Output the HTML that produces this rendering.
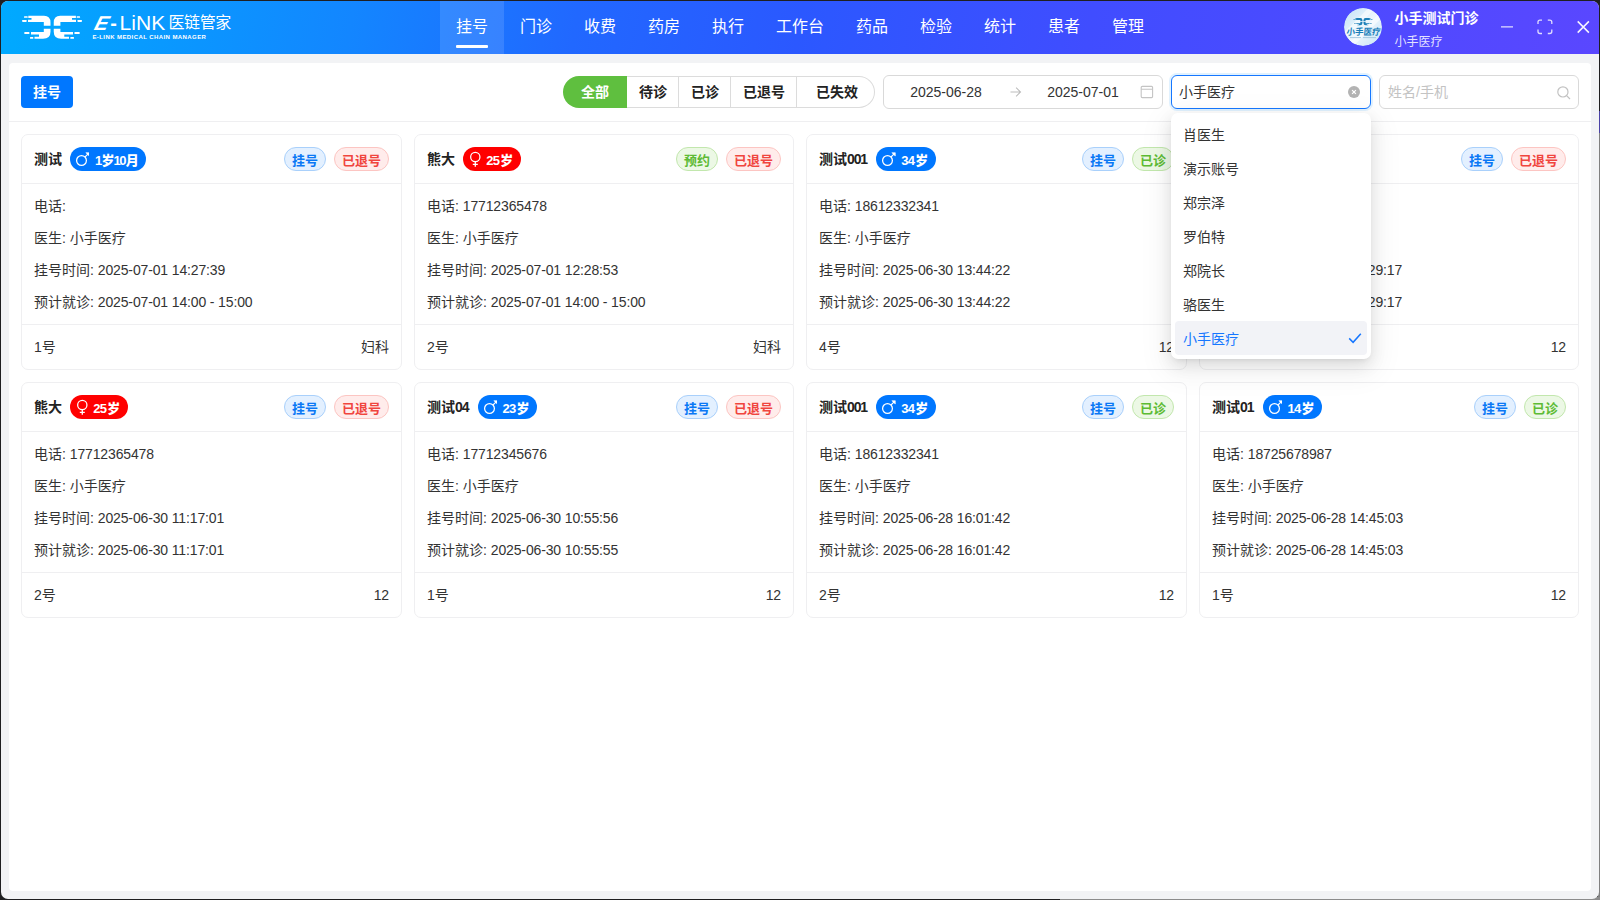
<!DOCTYPE html>
<html lang="zh-CN">
<head>
<meta charset="utf-8">
<title>E-LINK 医链管家</title>
<style>
*{box-sizing:border-box;margin:0;padding:0}
html,body{width:1600px;height:900px;overflow:hidden}
body{background:#1f1f21;font-family:"Liberation Sans","Noto Sans CJK SC",sans-serif;font-size:14px;color:#333;position:relative}
.win{position:absolute;left:1px;top:1px;width:1598px;height:898px;border-radius:7px;background:#f2f3f5;overflow:hidden}
.hdr{position:absolute;left:0;top:0;width:1598px;height:53px;background:linear-gradient(100deg,#00aaff 0%,#1386ff 22%,#2168ff 36%,#2b58ff 50%,#404dff 68%,#5a47ff 100%);color:#fff}
.nav{position:absolute;left:439px;top:0;height:53px;display:flex}
.nav div{width:64px;height:53px;line-height:52px;text-align:center;font-size:16px;position:relative}
.nav div.w3{width:80px}
.nav div.on{background:rgba(255,255,255,.12)}
.nav div.on:after{content:"";position:absolute;left:16px;bottom:6px;width:32px;height:3px;background:#fff;border-radius:1px}
.panel{position:absolute;left:8px;top:62px;width:1582px;height:828px;background:#fff;border-radius:4px}
.tb{position:absolute;left:0;top:0;width:1582px;height:59px;border-bottom:1px solid #efeff1}
.btn{position:absolute;left:12px;top:13px;width:52px;height:32px;background:#0077ff;border-radius:4px;color:#fff;font-weight:bold;font-size:14px;text-align:center;line-height:33px}
.seg{position:absolute;left:554px;top:13px;height:32px;width:312px;display:flex;font-weight:bold;color:#222;line-height:33px;text-align:center}
.seg div{border:1px solid #dcdcdc;border-left:0;height:32px;background:#fff;padding-left:1px;line-height:30px}
.seg div:first-child{border:0;padding-left:0;line-height:32px;background:#5fbf3f;color:#fff;border-radius:16px 0 0 16px}
.seg div:last-child{border-radius:0 16px 16px 0;padding-left:3px}
.inp{position:absolute;top:12px;height:34px;border:1px solid #d9d9d9;border-radius:6px;background:#fff;line-height:32px}
.card{position:absolute;width:380px;height:236px;border:1px solid #efeff1;border-radius:7px;background:#fff}
.ch{position:absolute;left:0;top:0;right:0;height:49px;border-bottom:1px solid #efeff1}
.nm{position:absolute;left:12px;top:0;line-height:47px;font-weight:bold;color:#222;white-space:nowrap;display:flex;align-items:center;height:48px}
.bd{display:inline-flex;align-items:center;height:24px;border-radius:12px;background:#0077ff;color:#fff;font-size:13px;font-weight:bold;padding:0 7.7px 0 5.8px;margin-left:8.3px;line-height:24px}
.bd.f{background:#ff0000;padding-left:6.7px}
.bd svg{margin-right:5.6px;flex:none}
.bd b{position:relative;top:1.5px;letter-spacing:-.4px;margin-right:.4px}
.bd b i{letter-spacing:-.7px;margin-right:1px}
.bd b.t{letter-spacing:-1px}
.bd b.t i{letter-spacing:-1.4px;margin-right:.6px}
i{font-style:normal;letter-spacing:-.14px}
.nm i{letter-spacing:-1.1px;margin-right:1.1px}
.tags{position:absolute;right:12px;top:12px;display:flex;gap:8px}
.tg{height:24px;line-height:25px;border-radius:12px;font-size:13px;font-weight:bold;padding:0 7px;border:1px solid}
.tg.b{color:#0a78f5;background:#e3f0ff;border-color:#a9d0fb}
.tg.r{color:#f0453e;background:#ffeceb;border-color:#fcc5c2}
.tg.g{color:#5dbb34;background:#ecf8e5;border-color:#c2e7ad}
.cb{position:absolute;left:12px;top:55px;line-height:32px;color:#333;white-space:nowrap}
.cf{position:absolute;left:0;top:189px;right:0;height:45px;border-top:1px solid #efeff1;line-height:45px;padding:0 12px;display:flex;justify-content:space-between;color:#333}
.dd{position:absolute;left:1170px;top:112px;width:200px;height:246px;background:#fff;border-radius:7px;box-shadow:0 6px 16px rgba(0,0,0,.10),0 3px 6px -4px rgba(0,0,0,.14),0 9px 28px 8px rgba(0,0,0,.05);padding:4px}
.dd div{height:34px;line-height:37px;padding-left:8px;color:#333;border-radius:4px;position:relative}
.dd div.on{background:#f2f3f7;color:#1677ff}

.brand{position:absolute;left:167.5px;top:0;line-height:44px;font-size:16px;color:#fff;letter-spacing:-.4px}
.ava{position:absolute;left:1343px;top:7px;width:38px;height:38px;border-radius:50%;overflow:hidden}
.un{position:absolute;left:1393.5px;top:6px;line-height:22px;font-size:14px;font-weight:bold;color:#fff}
.us{position:absolute;left:1393.5px;top:30.5px;line-height:20px;font-size:12px;color:rgba(255,255,255,.85)}

.dt{position:absolute;top:0;text-align:center;color:#333}
.inp.sel{border-color:#1677ff;box-shadow:0 0 0 2px rgba(5,145,255,.12)}
</style>
</head>
<body>
<div style="position:absolute;left:1598px;top:111px;width:2px;height:22px;background:#4a42a6"></div>
<div style="position:absolute;left:1598px;top:133px;width:2px;height:767px;background:#808080"></div>
<div style="position:absolute;left:1060px;top:897px;width:540px;height:3px;background:#8c8c8c"></div>
<div class="win">
  <div class="hdr">

    <svg class="logo" width="230" height="53" viewBox="0 0 230 53" style="position:absolute;left:9px;top:0">
      <g transform="translate(-10,-1)" fill="#fff">
        <path d="M28.3 15.8H44Q50.5 15.8 50.5 22.6V25.8H43.8V22H28V19.8H31.5V17.9H28.3Z"/>
        <path d="M50.5 28.8V31.8Q50.5 38.8 43 38.8H34.5V36.7H39V34.6H31V32H43.8V28.8Z"/>
        <path d="M75.9 15.8H60.2Q53.75 15.8 53.75 22.6V25.8H60.4V22H76V19.8H72V17.9H75.9Z"/>
        <path d="M53.75 28.8V31.8Q53.75 38.8 61.2 38.8H69V36.7H64.3V34.6H73V32H60.4V28.8Z"/>
        <rect x="24" y="16.2" width="3.7" height="1.6" rx=".6"/><rect x="22" y="19.9" width="4.8" height="2" rx=".8"/>
        <rect x="24.2" y="32.1" width="5.3" height="1.9" rx=".8"/><rect x="30" y="37" width="3.3" height="1.8" rx=".6"/>
        <rect x="76.6" y="16.2" width="3.5" height="1.6" rx=".6"/><rect x="77.3" y="19.9" width="4.8" height="2" rx=".8"/>
        <rect x="74.3" y="32.1" width="5.5" height="1.9" rx=".8"/><rect x="70.3" y="37" width="3.7" height="1.8" rx=".6"/>
      </g>
      <text transform="translate(82.3,29) skewX(-26)" font-family="Liberation Sans, sans-serif" font-size="20" font-weight="bold" fill="#fff" textLength="13.5" lengthAdjust="spacingAndGlyphs">E</text>
      <text x="100.2" y="29" font-family="Liberation Sans, sans-serif" font-size="20" font-weight="bold" fill="#fff" textLength="6.6" lengthAdjust="spacingAndGlyphs">-</text>
      <text x="109.6" y="29" font-family="Liberation Sans, sans-serif" font-size="20" fill="#fff" textLength="45.6" lengthAdjust="spacingAndGlyphs">LiNK</text>
      <text x="82.4" y="38.4" font-family="Liberation Sans, sans-serif" font-size="6" font-weight="bold" fill="#fff" textLength="113.5" lengthAdjust="spacing">E-LINK MEDICAL CHAIN MANAGER</text>
    </svg>
    <div class="brand">医链管家</div>

    <div class="ava">
      <svg width="38" height="38" viewBox="0 0 38 38">
        <defs><linearGradient id="ag" x1="0" y1="0" x2="1" y2="1"><stop offset="0" stop-color="#bfe0f5"/><stop offset=".5" stop-color="#eef7fd"/><stop offset="1" stop-color="#c6e3f6"/></linearGradient></defs>
        <circle cx="19" cy="19" r="19" fill="url(#ag)"/>
        <path d="M-2 30L30 -2M4 40L40 4" stroke="#fff" stroke-opacity=".55" stroke-width="5"/>
        <g transform="translate(9.4,10) scale(.317) translate(-22,-15.8)" fill="#1b7fb8">
          <path d="M28.3 15.8H44Q50.5 15.8 50.5 22.6V25.8H43.8V22H28V19.8H31.5V17.9H28.3Z"/>
          <path d="M50.5 28.8V31.8Q50.5 38.8 43 38.8H34.5V36.7H39V34.6H31V32H43.8V28.8Z"/>
          <path d="M75.9 15.8H60.2Q53.75 15.8 53.75 22.6V25.8H60.4V22H76V19.8H72V17.9H75.9Z"/>
          <path d="M53.75 28.8V31.8Q53.75 38.8 61.2 38.8H69V36.7H64.3V34.6H73V32H60.4V28.8Z"/>
          <rect x="22" y="19.9" width="4.8" height="2"/><rect x="24.2" y="32.1" width="5.3" height="1.9"/>
          <rect x="77.3" y="19.9" width="4.8" height="2"/><rect x="74.3" y="32.1" width="5.5" height="1.9"/>
        </g>
        <text x="19.4" y="27.3" text-anchor="middle" font-family="Liberation Sans, Noto Sans CJK SC, sans-serif" font-size="9" font-weight="bold" fill="#167db8" textLength="34" lengthAdjust="spacingAndGlyphs" transform="skewX(-6) translate(2.8,0)">小手医疗</text>
        <path d="M6 29.6h11M19 29.6h13" stroke="#9ec4dc" stroke-width=".9"/>
      </svg>
    </div>
    <div class="un">小手测试门诊</div>
    <div class="us">小手医疗</div>
    <svg class="wc" width="100" height="53" viewBox="0 0 100 53" style="position:absolute;left:1494px;top:0" fill="none" stroke="#fff" stroke-opacity=".82" stroke-width="1.3">
      <path d="M6 25.8h12"/>
      <path d="M43 23v-1.9a2 2 0 0 1 2-2h2M52.8 19.1h2a2 2 0 0 1 2 2V23M56.8 28.6v1.9a2 2 0 0 1-2 2h-2M47 32.5h-2a2 2 0 0 1-2-2v-1.9"/>
      <path d="M82.7 20.4l11.2 11.2M93.9 20.4L82.7 31.6" stroke-opacity=".95" stroke-width="1.5"/>
    </svg>
    <div class="nav">
      <div class="on">挂号</div><div>门诊</div><div>收费</div><div>药房</div><div>执行</div><div class="w3">工作台</div><div>药品</div><div>检验</div><div>统计</div><div>患者</div><div>管理</div>
    </div>
  </div>
  <div class="panel">
    <div class="tb">
      <div class="btn">挂号</div>
      <div class="inp" style="left:874px;width:280px">
        <span class="dt" style="left:-1px;width:126px">2025-06-28</span>
        <svg width="14" height="14" viewBox="0 0 14 14" style="position:absolute;left:125px;top:9px" fill="none" stroke="#bdbdbd" stroke-width="1.1"><path d="M1.5 7h10M7.1 2.6L11.5 7l-4.4 4.4"/></svg>
        <span class="dt" style="left:136px;width:126px">2025-07-01</span>
        <svg width="14" height="14" viewBox="0 0 14 14" style="position:absolute;left:256px;top:9px" fill="none" stroke="#c4c4c4" stroke-width="1.1"><rect x="1.2" y="1.4" width="11.4" height="11.2" rx="1"/><path d="M1.2 4.3h11.4"/></svg>
      </div>
      <div class="inp sel" style="left:1162px;width:200px">
        <span style="position:absolute;left:7px;top:0;color:#333">小手医疗</span>
        <svg width="12" height="12" viewBox="0 0 12 12" style="position:absolute;left:176px;top:10px"><circle cx="6" cy="6" r="6" fill="#b3b3b3"/><path d="M4.1 4.1l3.8 3.8M7.9 4.1L4.1 7.9" stroke="#fff" stroke-width="1.2"/></svg>
      </div>
      <div class="inp" style="left:1370px;width:200px">
        <span style="position:absolute;left:8px;top:0;color:#c3c3c3">姓名/手机</span>
        <svg width="16" height="16" viewBox="0 0 16 16" style="position:absolute;left:175.5px;top:9px" fill="none" stroke="#c2c2c2" stroke-width="1.2"><circle cx="6.9" cy="6.9" r="5.1"/><path d="M10.6 10.6l3.4 3.4"/></svg>
      </div>

      <div class="seg"><div style="width:64px">全部</div><div style="width:52px">待诊</div><div style="width:52px">已诊</div><div style="width:66px">已退号</div><div style="width:78px">已失效</div></div>
    </div>
<!--CARDS-->
    <div class="card" style="left:12px;top:71px;width:381px">
      <div class="ch"><div class="nm">测试<span class="bd"><svg class="m" width="13.4" height="16" viewBox="0 0 13.4 16" fill="none" stroke="#fff" stroke-width="1.25"><circle cx="5.5" cy="9.5" r="4.9"/><path d="M9.1 5.9L12.4 2.6"/><path d="M9.9 1.7h3.4v3.4z" fill="#fff" stroke-width=".6" stroke-linejoin="round"/></svg><b class="t"><i>1</i>岁<i>10</i>月</b></span></div><div class="tags"><span class="tg b">挂号</span><span class="tg r">已退号</span></div></div>
      <div class="cb">电话: <br>医生: 小手医疗<br>挂号时间: <i>2025-07-01 14:27:39</i><br>预计就诊: <i>2025-07-01 14:00 - 15:00</i></div>
      <div class="cf"><span><i>1</i>号</span><span>妇科</span></div>
    </div>
    <div class="card" style="left:405px;top:71px;width:380px">
      <div class="ch"><div class="nm">熊大<span class="bd f"><svg class="f" width="10.6" height="16" viewBox="0 0 10.6 16" fill="none" stroke="#fff" stroke-width="1.25"><circle cx="5.3" cy="5.9" r="4.65"/><path d="M5.3 10.6v5.2M2.8 13.4h5" stroke-width="1.3"/></svg><b><i>25</i>岁</b></span></div><div class="tags"><span class="tg g">预约</span><span class="tg r">已退号</span></div></div>
      <div class="cb">电话: <i>17712365478</i><br>医生: 小手医疗<br>挂号时间: <i>2025-07-01 12:28:53</i><br>预计就诊: <i>2025-07-01 14:00 - 15:00</i></div>
      <div class="cf"><span><i>2</i>号</span><span>妇科</span></div>
    </div>
    <div class="card" style="left:797px;top:71px;width:381px">
      <div class="ch"><div class="nm">测试<i>001</i><span class="bd"><svg class="m" width="13.4" height="16" viewBox="0 0 13.4 16" fill="none" stroke="#fff" stroke-width="1.25"><circle cx="5.5" cy="9.5" r="4.9"/><path d="M9.1 5.9L12.4 2.6"/><path d="M9.9 1.7h3.4v3.4z" fill="#fff" stroke-width=".6" stroke-linejoin="round"/></svg><b><i>34</i>岁</b></span></div><div class="tags"><span class="tg b">挂号</span><span class="tg g">已诊</span></div></div>
      <div class="cb">电话: <i>18612332341</i><br>医生: 小手医疗<br>挂号时间: <i>2025-06-30 13:44:22</i><br>预计就诊: <i>2025-06-30 13:44:22</i></div>
      <div class="cf"><span><i>4</i>号</span><span><i>12</i></span></div>
    </div>
    <div class="card" style="left:1190px;top:71px;width:380px">
      <div class="ch"><div class="nm">测试<i>01</i><span class="bd"><svg class="m" width="13.4" height="16" viewBox="0 0 13.4 16" fill="none" stroke="#fff" stroke-width="1.25"><circle cx="5.5" cy="9.5" r="4.9"/><path d="M9.1 5.9L12.4 2.6"/><path d="M9.9 1.7h3.4v3.4z" fill="#fff" stroke-width=".6" stroke-linejoin="round"/></svg><b><i>14</i>岁</b></span></div><div class="tags"><span class="tg b">挂号</span><span class="tg r">已退号</span></div></div>
      <div class="cb">电话: <i>18725678987</i><br>医生: 小手医疗<br>挂号时间: <i>2025-06-30 11:29:17</i><br>预计就诊: <i>2025-06-30 11:29:17</i></div>
      <div class="cf"><span><i>3</i>号</span><span><i>12</i></span></div>
    </div>
    <div class="card" style="left:12px;top:319px;width:381px">
      <div class="ch"><div class="nm">熊大<span class="bd f"><svg class="f" width="10.6" height="16" viewBox="0 0 10.6 16" fill="none" stroke="#fff" stroke-width="1.25"><circle cx="5.3" cy="5.9" r="4.65"/><path d="M5.3 10.6v5.2M2.8 13.4h5" stroke-width="1.3"/></svg><b><i>25</i>岁</b></span></div><div class="tags"><span class="tg b">挂号</span><span class="tg r">已退号</span></div></div>
      <div class="cb">电话: <i>17712365478</i><br>医生: 小手医疗<br>挂号时间: <i>2025-06-30 11:17:01</i><br>预计就诊: <i>2025-06-30 11:17:01</i></div>
      <div class="cf"><span><i>2</i>号</span><span><i>12</i></span></div>
    </div>
    <div class="card" style="left:405px;top:319px;width:380px">
      <div class="ch"><div class="nm">测试<i>04</i><span class="bd"><svg class="m" width="13.4" height="16" viewBox="0 0 13.4 16" fill="none" stroke="#fff" stroke-width="1.25"><circle cx="5.5" cy="9.5" r="4.9"/><path d="M9.1 5.9L12.4 2.6"/><path d="M9.9 1.7h3.4v3.4z" fill="#fff" stroke-width=".6" stroke-linejoin="round"/></svg><b><i>23</i>岁</b></span></div><div class="tags"><span class="tg b">挂号</span><span class="tg r">已退号</span></div></div>
      <div class="cb">电话: <i>17712345676</i><br>医生: 小手医疗<br>挂号时间: <i>2025-06-30 10:55:56</i><br>预计就诊: <i>2025-06-30 10:55:55</i></div>
      <div class="cf"><span><i>1</i>号</span><span><i>12</i></span></div>
    </div>
    <div class="card" style="left:797px;top:319px;width:381px">
      <div class="ch"><div class="nm">测试<i>001</i><span class="bd"><svg class="m" width="13.4" height="16" viewBox="0 0 13.4 16" fill="none" stroke="#fff" stroke-width="1.25"><circle cx="5.5" cy="9.5" r="4.9"/><path d="M9.1 5.9L12.4 2.6"/><path d="M9.9 1.7h3.4v3.4z" fill="#fff" stroke-width=".6" stroke-linejoin="round"/></svg><b><i>34</i>岁</b></span></div><div class="tags"><span class="tg b">挂号</span><span class="tg g">已诊</span></div></div>
      <div class="cb">电话: <i>18612332341</i><br>医生: 小手医疗<br>挂号时间: <i>2025-06-28 16:01:42</i><br>预计就诊: <i>2025-06-28 16:01:42</i></div>
      <div class="cf"><span><i>2</i>号</span><span><i>12</i></span></div>
    </div>
    <div class="card" style="left:1190px;top:319px;width:380px">
      <div class="ch"><div class="nm">测试<i>01</i><span class="bd"><svg class="m" width="13.4" height="16" viewBox="0 0 13.4 16" fill="none" stroke="#fff" stroke-width="1.25"><circle cx="5.5" cy="9.5" r="4.9"/><path d="M9.1 5.9L12.4 2.6"/><path d="M9.9 1.7h3.4v3.4z" fill="#fff" stroke-width=".6" stroke-linejoin="round"/></svg><b><i>14</i>岁</b></span></div><div class="tags"><span class="tg b">挂号</span><span class="tg g">已诊</span></div></div>
      <div class="cb">电话: <i>18725678987</i><br>医生: 小手医疗<br>挂号时间: <i>2025-06-28 14:45:03</i><br>预计就诊: <i>2025-06-28 14:45:03</i></div>
      <div class="cf"><span><i>1</i>号</span><span><i>12</i></span></div>
    </div>
<!--/CARDS-->
  </div>
  <div class="dd"><div>肖医生</div><div>演示账号</div><div>郑宗泽</div><div>罗伯特</div><div>郑院长</div><div>骆医生</div><div class="on">小手医疗<svg width="14" height="14" viewBox="0 0 14 14" style="position:absolute;right:5px;top:10px" fill="none" stroke="#1677ff" stroke-width="1.5"><path d="M1.2 7.4l3.9 3.9 7.7-8.6"/></svg></div></div>
</div>
</body>
</html>
